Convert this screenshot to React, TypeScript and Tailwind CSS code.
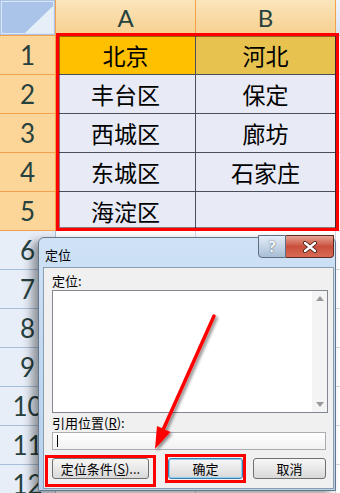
import React from 'react';

const cjk = { fontFamily: '"Noto Sans CJK SC", "Noto Sans", sans-serif' };
const num = { fontFamily: 'Lato, "Open Sans", sans-serif' };

const rows: [string, string][] = [
  ['北京', '河北'],
  ['丰台区', '保定'],
  ['西城区', '廊坊'],
  ['东城区', '石家庄'],
  ['海淀区', ''],
];

const RowHead = ({ n, selected }: { n: number; selected: boolean }) => (
  <div
    className={`flex items-center justify-center border-r border-b text-[26px] text-[#27413e] ${
      selected ? 'bg-[#fcd698] border-[#f2a04a]' : 'bg-[#e8eef8] border-[#a8bfd9]'
    }`}
    style={num}
  >
    {n}
  </div>
);

const Cell = ({ text, className }: { text: string; className: string }) => (
  <div className={`flex items-center justify-center border-r border-b text-[23px] text-black ${className}`} style={cjk}>
    {text}
  </div>
);

const Button = ({ label, width, isDefault }: { label: React.ReactNode; width: string; isDefault?: boolean }) => (
  <div
    className={`${width} h-[21px] flex items-center justify-center rounded-[3px] border text-[13px] text-black bg-gradient-to-b from-[#f6f6f6] via-[#e9e9e9] to-[#d8d8d8] ${
      isDefault ? 'border-[#3c7fb1] shadow-[inset_0_0_0_1px_#8ed0ef]' : 'border-[#707070]'
    }`}
    style={cjk}
  >
    {label}
  </div>
);

export default function App() {
  return (
    <div className="relative w-[340px] h-[493px] overflow-hidden bg-white">
      {/* sheet */}
      <div className="grid grid-cols-[56px_140px_140px_1fr] grid-rows-[36px_repeat(12,39px)]">
        {/* corner */}
        <div className="relative border-r border-b border-[#f2a04a] bg-[#a9c4e8]">
          <div className="absolute inset-[1px] border border-[#dce7f5]" />
          <svg className="absolute left-0 top-0" width="56" height="36">
            <polygon points="25,33 53,33 53,6" fill="#e6eef8" />
          </svg>
        </div>
        {['A', 'B'].map(c => (
          <div
            key={c}
            className="flex items-center justify-center border-r border-b border-[#f2a04a] bg-gradient-to-b from-[#fbe5bb] to-[#f6d08f] text-[24px] text-[#27413e]"
            style={num}
          >
            {c}
          </div>
        ))}
        <div className="border-b border-[#a8bfd9] bg-gradient-to-b from-[#f1f5fb] to-[#dbe5f3]" />

        {rows.map(([a, b], i) => (
          <React.Fragment key={i}>
            <RowHead n={i + 1} selected />
            <Cell text={a} className={`border-[#4a4d5a] ${i === 0 ? 'bg-[#ffc000]' : 'bg-[#e8eaf5]'}`} />
            <Cell text={b} className={`border-[#4a4d5a] ${i === 0 ? 'bg-[#e8c24e]' : 'bg-[#e8eaf5]'}`} />
            <div className="border-b border-[#d0d7e5] bg-white" />
          </React.Fragment>
        ))}

        {[6, 7, 8, 9, 10, 11, 12].map(n => (
          <React.Fragment key={n}>
            <RowHead n={n} selected={false} />
            <div className="border-r border-b border-[#d0d7e5] bg-white" />
            <div className="border-r border-b border-[#d0d7e5] bg-white" />
            <div className="border-b border-[#d0d7e5] bg-white" />
          </React.Fragment>
        ))}
      </div>

      {/* selection outline */}
      <div className="absolute left-[56px] top-[33px] w-[283px] h-[198px] border-[3.5px] border-[#ff0000] shadow-[inset_0_0_0_1px_rgba(60,0,0,0.5)]" />

      {/* dialog */}
      <div className="absolute left-[38px] top-[237px] w-[298px] h-[254px] rounded-t-[6px] border border-[#66778b] bg-gradient-to-b from-[#cfe2f6] via-[#c0d8f1] to-[#b8d1ed] shadow-[-6px_4px_10px_rgba(0,0,0,0.4)]">
        <div className="h-[29px] pl-[6px] pt-[9px] text-[13px] text-black leading-[16px]" style={cjk}>
          定位
        </div>

        {/* caption buttons */}
        <div className="absolute left-[219px] top-[-3px] flex">
          <div className="w-[28px] h-[23px] flex items-center justify-center rounded-bl-[4px] border border-[#5f6f82] bg-gradient-to-b from-[#e4edf7] via-[#c5d5e6] to-[#a9bed4] text-[15px] font-bold text-white [text-shadow:0_0_2px_#34495e]" style={num}>
            ?
          </div>
          <div className="w-[48px] h-[23px] flex items-center justify-center rounded-br-[4px] border border-l-0 border-[#5d2a22] bg-gradient-to-b from-[#e6a295] via-[#c94f3c] to-[#d86b55]">
            <svg width="16" height="12" viewBox="0 0 16 12">
              <path d="M3 2 L13 10 M13 2 L3 10" stroke="#3b1b15" strokeWidth="4" strokeLinecap="round" />
              <path d="M3 2 L13 10 M13 2 L3 10" stroke="#ffffff" strokeWidth="2.4" strokeLinecap="round" />
            </svg>
          </div>
        </div>

        {/* client area */}
        <div className="ml-[4px] w-[291px] h-[222px] border border-[#8d9db0] bg-[#f0f0f0] pl-[8px] pr-[5px] pt-[4px] flex flex-col" style={cjk}>
          <div className="h-[18px] text-[13px] leading-[18px] text-black">定位:</div>
          <div className="h-[123px] flex border border-[#828790] bg-white">
            <div className="flex-1" />
            <div className="w-[15px] flex flex-col justify-between items-center py-[5px] bg-[#f4f4f4]">
              <svg width="8" height="5"><polygon points="0,5 8,5 4,0" fill="#9a9a9a" /></svg>
              <svg width="8" height="5"><polygon points="0,0 8,0 4,5" fill="#9a9a9a" /></svg>
            </div>
          </div>
          <div className="h-[19px] flex items-center text-[13px] text-black">
            引用位置(<span className="underline">R</span>):
          </div>
          <div className="h-[18px] w-[274px] flex items-center border border-[#abadb3] bg-gradient-to-b from-white to-[#f2f2f2] pl-[4px]">
            <div className="w-px h-[12px] bg-black" />
          </div>
          <div className="mt-[8px] flex">
            <Button width="w-[97px]" label={<>定位条件(<span className="underline">S</span>)...</>} />
            <div className="ml-[19px]">
              <Button width="w-[75px]" label="确定" isDefault />
            </div>
            <div className="ml-[10px]">
              <Button width="w-[73px]" label="取消" />
            </div>
          </div>
        </div>
      </div>

      {/* annotation boxes */}
      <div className="absolute left-[45px] top-[455px] w-[111px] h-[32px] border-[3px] border-[#ff0000]" />
      <div className="absolute left-[165px] top-[454px] w-[81px] h-[29px] border-[3px] border-[#ff0000]" />

      {/* annotation arrow */}
      <svg className="absolute left-0 top-0 pointer-events-none" width="340" height="493">
        <defs>
          <filter id="sh" x="-20%" y="-20%" width="140%" height="140%">
            <feDropShadow dx="2" dy="2" stdDeviation="1.5" floodColor="#000" floodOpacity="0.45" />
          </filter>
        </defs>
        <g filter="url(#sh)">
          <line x1="214" y1="316" x2="163" y2="430" stroke="#ff0000" strokeWidth="3.5" strokeLinecap="round" />
          <polygon points="155,449 170.5,432 157,426" fill="#ff0000" />
        </g>
      </svg>
    </div>
  );
}
